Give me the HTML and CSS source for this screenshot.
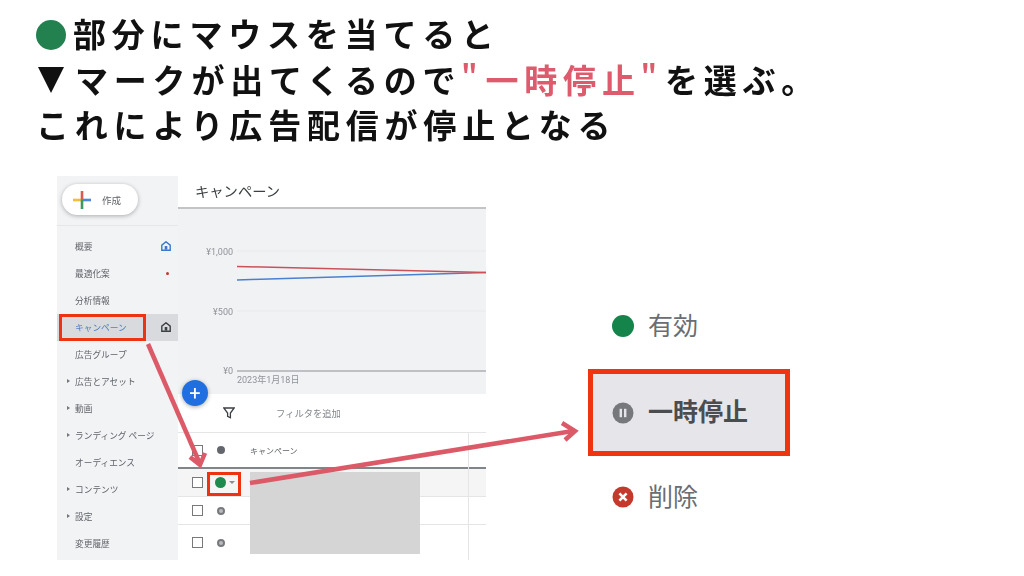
FILE: index.html
```html
<!DOCTYPE html>
<html lang="ja">
<head>
<meta charset="utf-8">
<title>一時停止</title>
<link rel="stylesheet" href="styles.css">
</head>
<body>
<div class="slide">
  <div class="headline">
    <div class="line"><span class="green-dot"></span>部分にマウスを当てると</div>
    <div class="line"><span class="tri"></span>マークが出てくるので<span class="accent"><span class="quote">"</span>一時停止<span class="quote">"</span></span>を選ぶ。</div>
    <div class="line">これにより広告配信が停止となる</div>
  </div>
  <div class="stage">
    <div class="panel">
      <aside class="sidebar">
        <div class="create-wrap">
          <div class="create">
            <svg class="plus" viewBox="0 0 18 18" width="18" height="18">
              <rect x="0" y="7.7" width="9" height="2.6" fill="#f2bd3c"/>
              <rect x="9" y="7.7" width="9" height="2.6" fill="#4c86dd"/>
              <rect x="7.7" y="0" width="2.6" height="9" fill="#dd5a4c"/>
              <rect x="7.7" y="9" width="2.6" height="9" fill="#3d9a5a"/>
            </svg>
            <span>作成</span>
          </div>
        </div>
        <nav class="nav">
          <div class="nav-row"><span class="label">概要</span><svg class="home" viewBox="0 0 10 10" width="10" height="10"><path d="M5 .8 9.2 4.2V9.2H.8V4.2Z" fill="none" stroke="#3b78c9" stroke-width="1.4"/><rect x="3.7" y="5" width="2.6" height="3.6" fill="#3b78c9"/></svg></div>
          <div class="nav-row"><span class="label">最適化案</span><span class="alert"></span></div>
          <div class="nav-row"><span class="label">分析情報</span></div>
          <div class="nav-row active"><span class="label">キャンペーン</span><svg class="home" viewBox="0 0 10 10" width="10" height="10"><path d="M5 .8 9.2 4.2V9.2H.8V4.2Z" fill="none" stroke="#3c4043" stroke-width="1.4"/><rect x="3.7" y="5" width="2.6" height="3.6" fill="#3c4043"/></svg></div>
          <div class="nav-row"><span class="label">広告グループ</span></div>
          <div class="nav-row"><span class="caret"></span><span class="label">広告とアセット</span></div>
          <div class="nav-row"><span class="caret"></span><span class="label">動画</span></div>
          <div class="nav-row"><span class="caret"></span><span class="label">ランディング ページ</span></div>
          <div class="nav-row"><span class="label">オーディエンス</span></div>
          <div class="nav-row"><span class="caret"></span><span class="label">コンテンツ</span></div>
          <div class="nav-row"><span class="caret"></span><span class="label">設定</span></div>
          <div class="nav-row"><span class="label">変更履歴</span></div>
        </nav>
      </aside>
      <main class="main">
        <header class="title">キャンペーン</header>
        <svg class="chart" viewBox="0 0 308 185" width="308" height="185">
          <line x1="59" y1="42" x2="308" y2="42" stroke="#e8eaec"/>
          <line x1="59" y1="102" x2="308" y2="102" stroke="#e8eaec"/>
          <line x1="59" y1="162" x2="308" y2="162" stroke="#8b8e92"/>
          <text class="axis" x="55" y="45.500" text-anchor="end">¥1,000</text>
          <text class="axis" x="55" y="105.500" text-anchor="end">¥500</text>
          <text class="axis" x="55" y="165" text-anchor="end">¥0</text>
          <text class="axis" x="59" y="174">2023年1月18日</text>
          <line x1="59" y1="71" x2="308" y2="63.500" stroke="#4a80cf" stroke-width="1.500"/>
          <line x1="59" y1="57.500" x2="308" y2="63.500" stroke="#c9525a" stroke-width="1.500"/>
        </svg>
        <div class="filter-row">
          <svg class="funnel" viewBox="0 0 12 12" width="12" height="12"><path d="M.8 1H11.200L7.400 6V10.800L4.600 9.400V6Z" fill="none" stroke="#3c4043" stroke-width="1.300"/></svg>
          <span>フィルタを追加</span>
        </div>
        <div class="table">
          <div class="t-row t-head"><span class="check"></span><span class="st st-head"></span><span class="t-name">キャンペーン</span></div>
          <div class="t-row t-hover"><span class="check"></span><span class="st st-green"></span><span class="mini-caret"></span></div>
          <div class="t-row"><span class="check"></span><span class="st st-pause"></span></div>
          <div class="t-row t-last"><span class="check"></span><span class="st st-pause"></span></div>
          <div class="t-vline"></div>
        </div>
        <button class="fab" type="button">+</button>
      </main>
    </div>
    <div class="menu">
      <div class="menu-item">
        <span class="m-dot"></span><span class="m-text">有効</span>
      </div>
      <div class="menu-item selected">
        <svg class="m-icon" viewBox="0 0 22 22" width="22" height="22"><circle cx="11" cy="11" r="10.500" fill="#76787b"/><rect x="7.600" y="6.800" width="2.400" height="8.400" fill="#e6e6ea"/><rect x="12" y="6.800" width="2.400" height="8.400" fill="#e6e6ea"/></svg>
        <span class="m-text">一時停止</span>
      </div>
      <div class="menu-item">
        <svg class="m-icon" viewBox="0 0 22 22" width="22" height="22"><circle cx="11" cy="11" r="10.500" fill="#c5392c"/><path d="M7.400 7.400 14.600 14.600M14.600 7.400 7.400 14.600" stroke="#fff" stroke-width="2.600"/></svg>
        <span class="m-text">削除</span>
      </div>
    </div>
  </div>
  <div class="gray-block"></div>
  <div class="hl hl-nav"></div>
  <div class="hl hl-status"></div>
  <svg class="arrows" viewBox="0 0 1024 576" width="1024" height="576">
    <g fill="none" stroke="#dc5a68" stroke-width="4.500">
      <path d="M148 344 200 464"/>
      <path d="M190 457 200 465 205 453"/>
      <path d="M250 483 573 431"/>
      <path d="M562 423 575 431 565 440"/>
    </g>
  </svg>
</div>
</body>
</html>
```
FILE: styles.css
```css
* { box-sizing: border-box; }
html, body { margin: 0; padding: 0; background: #fff; }
.slide {
  position: relative;
  width: 1024px;
  height: 576px;
  overflow: hidden;
  font-family: "Noto Sans CJK JP", "Noto Sans", sans-serif;
}
.headline {
  height: 176px;
  padding: 11px 0 0 36px;
  font-size: 33px;
  font-weight: 700;
  letter-spacing: 5.800px;
  line-height: 45.500px;
  color: #111;
  white-space: nowrap;
  filter: blur(.3px);
}
.line { display: flex; align-items: center; height: 45.500px; }
.green-dot {
  width: 30px; height: 30px; border-radius: 50%;
  background: #23804f; margin: 2px 7px 0 0; flex: none;
}
.tri {
  width: 0; height: 0; flex: none;
  margin: 2px 11px 0 2px;
  border-left: 13px solid transparent;
  border-right: 13px solid transparent;
  border-top: 26px solid #111;
}
.accent { color: #dd5b6c; display: flex; align-items: center; }
.quote { font-size: 28px; margin-top: -6px; letter-spacing: 8px; }
.stage { display: flex; align-items: flex-start; padding-left: 57px; }
.panel { display: flex; width: 429px; height: 384px; flex: none; color: #5f6368; filter: blur(.35px); }
.sidebar { width: 121px; background: #f2f3f5; flex: none; }
.create-wrap { height: 50px; padding: 8px 0 0 5px; border-bottom: 1px solid #e6e7e9; }
.create {
  width: 76px; height: 31px; border-radius: 16px; background: #fff;
  box-shadow: 0 1px 4px rgba(60,64,67,.4);
  display: flex; align-items: center; padding-left: 11px; gap: 11px;
  font-size: 9.500px; color: #5f6368;
}
.nav { padding-top: 7px; }
.nav-row {
  position: relative; height: 27px; display: flex; align-items: center;
  padding-left: 18px; font-size: 8.700px; color: #5f6368; white-space: nowrap;
}
.nav-row.active { background: #d9dadd; color: #4a7fc9; }
.home { position: absolute; left: 104px; top: 8px; }
.alert { position: absolute; left: 109px; top: 12px; width: 3px; height: 3px; border-radius: 50%; background: #c5392c; }
.caret {
  position: absolute; left: 10px; top: 11px; width: 0; height: 0;
  border-left: 3px solid #70757a; border-top: 2.500px solid transparent; border-bottom: 2.500px solid transparent;
}
.main { position: relative; width: 308px; flex: none; background: #fff; }
.title {
  height: 33px; padding: 5px 0 0 17px; font-size: 14.300px; line-height: 20px; color: #3c4043;
  border-bottom: 2px solid #c2c4c7; background: #fff;
}
.chart { display: block; background: #f1f2f4; }
.axis { font-size: 9px; fill: #8f9397; font-family: "Roboto", "Noto Sans CJK JP", sans-serif; }
.filter-row {
  height: 39px; display: flex; align-items: center; padding-left: 45px; gap: 41px;
  border-bottom: 1px solid #e4e5e7; font-size: 9.300px; color: #80868b;
}
.table { position: relative; }
.t-row {
  position: relative; height: 28px; display: flex; align-items: center;
  padding-left: 14px; border-bottom: 1px solid #e4e5e7;
}
.t-head { height: 36px; border-bottom: 2px solid #80858a; }
.t-hover { background: #f5f5f6; }
.t-last { height: 35px; border-bottom: 0; }
.check { width: 11px; height: 11px; border: 1.500px solid #77797d; flex: none; background: #fff; }
.st { width: 9px; height: 9px; border-radius: 50%; margin-left: 14px; flex: none; }
.st-head { width: 8px; height: 8px; background: #63666c; }
.st-green { width: 11px; height: 11px; margin-left: 12px; background: #1f8a4d; }
.st-pause { width: 8px; height: 8px; background: #b9babd; border: 2.500px solid #77797d; }
.t-name { margin-left: 25px; font-size: 8px; color: #5f6368; }
.mini-caret {
  margin-left: 3px; width: 0; height: 0;
  border-left: 3px solid transparent; border-right: 3px solid transparent; border-top: 3px solid #8a8d91;
}
.t-vline { position: absolute; left: 290px; top: 0; bottom: 0; width: 1px; background: #e4e5e7; }
.fab {
  position: absolute; left: 4px; top: 204px; width: 26px; height: 26px; padding: 0;
  border: 0; border-radius: 50%; background: #1f6fe0; color: #fff;
  box-shadow: 0 1px 4px rgba(60,64,67,.45);
  font: 400 20px/24px "Roboto", sans-serif;
}
.menu { margin: 128px 0 0 102px; width: 202px; display: flex; flex-direction: column; }
.menu-item {
  height: 44px; display: flex; align-items: center; padding-left: 24px; gap: 14px;
  font-size: 25px; color: #6a6d71;
}
.m-text { margin-top: -5px; }
.m-dot { width: 22px; height: 22px; border-radius: 50%; background: #15844a; flex: none; }
.m-icon { flex: none; }
.menu-item.selected {
  height: 87px; margin: 21px 0 19px; padding-left: 19px;
  background: #e6e6ea; border: 5px solid #f0340f;
  font-weight: 700; color: #4a4c50;
}
.gray-block { position: absolute; left: 250px; top: 472px; width: 170px; height: 82px; background: #d5d5d5; }
.hl { position: absolute; border: 3.500px solid #ee3312; }
.hl-nav { left: 59px; top: 314px; width: 87px; height: 26.500px; }
.hl-status { left: 207px; top: 472px; width: 34px; height: 24px; }
.arrows { position: absolute; left: 0; top: 0; pointer-events: none; }
```
